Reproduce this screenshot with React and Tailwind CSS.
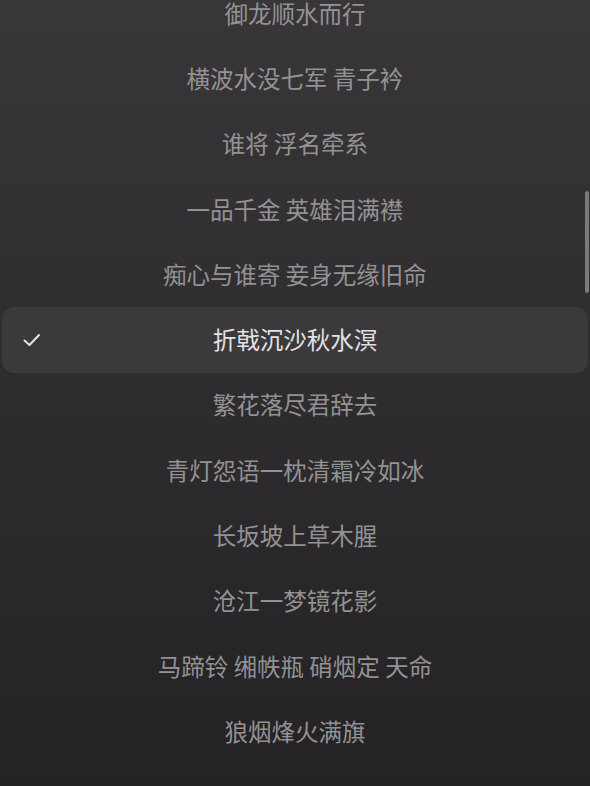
import React from "react";

const items = [
  "御龙顺水而行",
  "横波水没七军 青子衿",
  "谁将 浮名牵系",
  "一品千金 英雄泪满襟",
  "痴心与谁寄 妾身无缘旧命",
  "折戟沉沙秋水溟",
  "繁花落尽君辞去",
  "青灯怨语一枕清霜冷如冰",
  "长坂坡上草木腥",
  "沧江一梦镜花影",
  "马蹄铃 缃帙瓶 硝烟定 天命",
  "狼烟烽火满旗",
];

export default function App() {
  return (
    <div
      className="relative w-[590px] h-[786px] overflow-hidden bg-gradient-to-b from-[#39363a] to-[#242224]"
      style={{ fontFamily: '"Noto Sans CJK SC", "Noto Sans", sans-serif' }}
    >
      <div className="flex flex-col mt-[-19px]">
        {items.map((t, i) => {
          const sel = i === 5;
          return (
            <div
              key={i}
              className={
                "relative h-[65.27px] flex items-center justify-center mx-[2px] rounded-[12px] " +
                (sel ? "bg-[#3b393b]" : "")
              }
            >
              {sel && (
                <svg
                  className="absolute left-[20px] top-1/2 -translate-y-1/2"
                  width="20"
                  height="16"
                  viewBox="0 0 20 16"
                  fill="none"
                >
                  <path
                    d="M2.5 8.5 L7.5 13 L17 3"
                    stroke="#e6e6e6"
                    strokeWidth="2"
                    strokeLinecap="round"
                    strokeLinejoin="round"
                  />
                </svg>
              )}
              <span
                className={
                  "text-[23.5px] leading-none " +
                  (sel ? "text-[#e2e2e2]" : "text-[#939293]")
                }
              >
                {t}
              </span>
            </div>
          );
        })}
      </div>
      <div className="absolute right-[1px] top-[191px] w-[4px] h-[102px] rounded-full bg-[#7a797b]" />
    </div>
  );
}
